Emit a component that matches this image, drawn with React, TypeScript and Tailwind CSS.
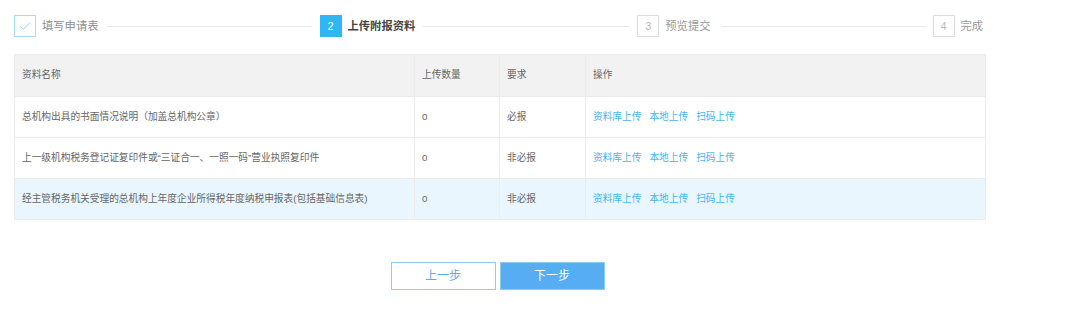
import React from 'react'

const FONT = { fontFamily: '"Liberation Sans", "Noto Sans CJK SC", sans-serif' }

interface Row {
  name: string
  count: number
  required: string
  highlight?: boolean
}

const rows: Row[] = [
  { name: '总机构出具的书面情况说明（加盖总机构公章）', count: 0, required: '必报' },
  { name: '上一级机构税务登记证复印件或“三证合一、一照一码”营业执照复印件', count: 0, required: '非必报' },
  {
    name: '经主管税务机关受理的总机构上年度企业所得税年度纳税申报表(包括基础信息表)',
    count: 0,
    required: '非必报',
    highlight: true,
  },
]

export default function App() {
  return (
    <div className="w-[1080px] h-[310px] bg-white pl-[14px] pt-[15px]" style={FONT}>
      <div className="w-[972px]">
        {/* ── Steps ── */}
        <div className="flex items-center h-[22px] whitespace-nowrap">
          <div className="shrink-0 w-[22px] h-[22px] border border-[#a6dcf7] flex items-center justify-center">
            <svg width="12" height="10" viewBox="0 0 12 10" fill="none">
              <path d="M1 5.2 L4.3 8.3 L11 1.5" stroke="#8fd0f2" strokeWidth="1" />
            </svg>
          </div>
          <span className="shrink-0 ml-[6px] text-[11.3px] text-[#8f8f8f]">填写申请表</span>
          <div className="shrink-0 mx-[8px] w-[205px] h-px bg-[#e8e8e8]" />

          <div className="shrink-0 w-[22px] h-[22px] bg-[#2fb6f3] flex items-center justify-center text-[11px] text-white">
            2
          </div>
          <span className="shrink-0 ml-[6px] text-[11.3px] text-[#444] font-semibold">上传附报资料</span>
          <div className="shrink-0 mx-[8px] w-[206px] h-px bg-[#e8e8e8]" />

          <div className="shrink-0 w-[22px] h-[22px] border border-[#dcdcdc] flex items-center justify-center text-[11px] text-[#bbb]">
            3
          </div>
          <span className="shrink-0 ml-[6px] text-[11.3px] text-[#999]">预览提交</span>
          <div className="shrink-0 ml-[10px] mr-[7px] w-[205px] h-px bg-[#e8e8e8]" />

          <div className="shrink-0 w-[22px] h-[22px] border border-[#dcdcdc] flex items-center justify-center text-[11px] text-[#bbb]">
            4
          </div>
          <span className="shrink-0 ml-[6px] text-[11.3px] text-[#999]">完成</span>
        </div>

        {/* ── Table ── */}
        <table className="mt-[17px] w-[972px] border-collapse border border-[#ececec] text-[9.7px] text-[#666] table-fixed">
          <colgroup>
            <col className="w-[400px]" />
            <col className="w-[85px]" />
            <col className="w-[86px]" />
            <col />
          </colgroup>
          <thead>
            <tr className="h-[42px] bg-[#f2f2f2]">
              <th className="text-left font-normal pl-[7px] border border-[#ececec]">资料名称</th>
              <th className="text-left font-normal pl-[7px] border border-[#ececec]">上传数量</th>
              <th className="text-left font-normal pl-[7px] border border-[#ececec]">要求</th>
              <th className="text-left font-normal pl-[7px] border border-[#ececec]">操作</th>
            </tr>
          </thead>
          <tbody>
            {rows.map((r) => (
              <tr key={r.name} className={`h-[41px] ${r.highlight ? 'bg-[#e9f6fd]' : 'bg-white'}`}>
                <td className="pl-[7px] border border-[#ececec] whitespace-nowrap">{r.name}</td>
                <td className="pl-[7px] border border-[#ececec]">{r.count}</td>
                <td className="pl-[7px] border border-[#ececec]">{r.required}</td>
                <td className="pl-[7px] border border-[#ececec] text-[#45b6f1] whitespace-nowrap">
                  <span>资料库上传</span>
                  <span className="ml-[8px]">本地上传</span>
                  <span className="ml-[8px]">扫码上传</span>
                </td>
              </tr>
            ))}
          </tbody>
        </table>

        {/* ── Buttons ── */}
        <div className="mt-[42px] mr-[5px] flex justify-center gap-[4px]">
          <button className="w-[105px] h-[28px] border border-[#8ecdf5] bg-white text-[12px] text-[#5aaef0]">
            上一步
          </button>
          <button className="w-[105px] h-[28px] border border-[#8ecdf5] bg-[#56adf2] text-[12px] text-white">
            下一步
          </button>
        </div>
      </div>
    </div>
  )
}
